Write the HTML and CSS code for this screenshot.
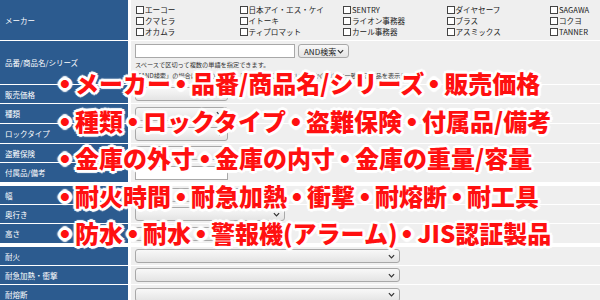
FILE: index.html
```html
<!DOCTYPE html>
<html lang="ja">
<head>
<meta charset="utf-8">
<title>金庫 検索</title>
<link rel="stylesheet" href="styles.css">
</head>
<body>
<div class="form">
  <div class="group">
    <div class="row r-maker">
      <div class="label">メーカー</div>
      <div class="field makers">
        <label class="cb"><span class="box"></span>エーコー</label>
        <label class="cb"><span class="box"></span>日本アイ・エス・ケイ</label>
        <label class="cb"><span class="box"></span>SENTRY</label>
        <label class="cb"><span class="box"></span>ダイヤセーフ</label>
        <label class="cb"><span class="box"></span>SAGAWA</label>
        <label class="cb"><span class="box"></span>クマヒラ</label>
        <label class="cb"><span class="box"></span>イトーキ</label>
        <label class="cb"><span class="box"></span>ライオン事務器</label>
        <label class="cb"><span class="box"></span>ブラス</label>
        <label class="cb"><span class="box"></span>コクヨ</label>
        <label class="cb"><span class="box"></span>オカムラ</label>
        <label class="cb"><span class="box"></span>ティプロマット</label>
        <label class="cb"><span class="box"></span>カール事務器</label>
        <label class="cb"><span class="box"></span>アスミックス</label>
        <label class="cb"><span class="box"></span>TANNER</label>
      </div>
    </div>
    <div class="row r-name">
      <div class="label">品番/商品名/シリーズ</div>
      <div class="field stack">
        <div class="inline">
          <span class="input w-name"></span>
          <span class="sel w-and">AND検索<svg class="chev" viewBox="0 0 8 5"><path d="M1 1l3 3 3-3" fill="none" stroke="#333" stroke-width="1.4"/></svg></span>
        </div>
        <p class="note">スペースで区切って複数の単語を指定できます。</p>
        <p class="note">「AND検索」の場合は全ての単語が、「OR検索」の場合はいずれかの単語に一致する商品を表示します。</p>
      </div>
    </div>
    <div class="row r-18">
      <div class="label">販売価格</div>
      <div class="field"><span class="sel w-s"><svg class="chev" viewBox="0 0 8 5"><path d="M1 1l3 3 3-3" fill="none" stroke="#333" stroke-width="1.4"/></svg></span></div>
    </div>
    <div class="row r-19">
      <div class="label">種類</div>
      <div class="field"><span class="sel w-s"><svg class="chev" viewBox="0 0 8 5"><path d="M1 1l3 3 3-3" fill="none" stroke="#333" stroke-width="1.4"/></svg></span></div>
    </div>
    <div class="row r-19">
      <div class="label">ロックタイプ</div>
      <div class="field"><span class="sel w-s"><svg class="chev" viewBox="0 0 8 5"><path d="M1 1l3 3 3-3" fill="none" stroke="#333" stroke-width="1.4"/></svg></span></div>
    </div>
    <div class="row r-18">
      <div class="label">盗難保険</div>
      <div class="field"><span class="sel w-s"><svg class="chev" viewBox="0 0 8 5"><path d="M1 1l3 3 3-3" fill="none" stroke="#333" stroke-width="1.4"/></svg></span></div>
    </div>
    <div class="row r-19">
      <div class="label">付属品/備考</div>
      <div class="field"><span class="input w-s"></span></div>
    </div>
  </div>
  <div class="group">
    <div class="row r-18">
      <div class="label">幅</div>
      <div class="field"><span class="sel w-m"><svg class="chev" viewBox="0 0 8 5"><path d="M1 1l3 3 3-3" fill="none" stroke="#333" stroke-width="1.4"/></svg></span></div>
    </div>
    <div class="row r-18">
      <div class="label">奥行き</div>
      <div class="field"><span class="sel w-m"><svg class="chev" viewBox="0 0 8 5"><path d="M1 1l3 3 3-3" fill="none" stroke="#333" stroke-width="1.4"/></svg></span></div>
    </div>
    <div class="row r-19">
      <div class="label">高さ</div>
      <div class="field"><span class="sel w-m"><svg class="chev" viewBox="0 0 8 5"><path d="M1 1l3 3 3-3" fill="none" stroke="#333" stroke-width="1.4"/></svg></span></div>
    </div>
  </div>
  <div class="group">
    <div class="row r-18">
      <div class="label">耐火</div>
      <div class="field"><span class="sel w-l"><svg class="chev" viewBox="0 0 8 5"><path d="M1 1l3 3 3-3" fill="none" stroke="#333" stroke-width="1.4"/></svg></span></div>
    </div>
    <div class="row r-18">
      <div class="label">耐急加熱・衝撃</div>
      <div class="field"><span class="sel w-l"><svg class="chev" viewBox="0 0 8 5"><path d="M1 1l3 3 3-3" fill="none" stroke="#333" stroke-width="1.4"/></svg></span></div>
    </div>
    <div class="row r-19">
      <div class="label">耐熔断</div>
      <div class="field"><span class="sel w-l"><svg class="chev" viewBox="0 0 8 5"><path d="M1 1l3 3 3-3" fill="none" stroke="#333" stroke-width="1.4"/></svg></span></div>
    </div>
  </div>
</div>
<div class="overlay">
  <p><span class="dot">・</span>メーカー<span class="dot">・</span>品番/商品名/シリーズ<span class="dot">・</span>販売価格</p>
  <p><span class="dot">・</span>種類<span class="dot">・</span>ロックタイプ<span class="dot">・</span>盗難保険<span class="dot">・</span>付属品/備考</p>
  <p><span class="dot">・</span>金庫の外寸<span class="dot">・</span>金庫の内寸<span class="dot">・</span>金庫の重量/容量</p>
  <p><span class="dot">・</span>耐火時間<span class="dot">・</span>耐急加熱<span class="dot">・</span>衝撃<span class="dot">・</span>耐熔断<span class="dot">・</span>耐工具</p>
  <p><span class="dot">・</span>防水<span class="dot">・</span>耐水<span class="dot">・</span>警報機(アラーム)<span class="dot">・</span>JIS認証製品</p>
</div>
</body>
</html>
```

FILE: styles.css
```css
* { box-sizing: border-box; margin: 0; padding: 0; }
html, body { width: 600px; height: 300px; overflow: hidden; }
body {
  background: #ffffff;
  font-family: "Noto Sans CJK JP", "Noto Sans", sans-serif;
  color: #222;
  position: relative;
}
.form { display: flex; flex-direction: column; gap: 4px; }
.group { display: flex; flex-direction: column; gap: 1px; }
.row {
  display: grid;
  grid-template-columns: 128px 469px;
  grid-template-rows: 100%;
  column-gap: 3px;
  overflow: hidden;
}
.r-maker { height: 40px; }
.r-name { height: 43px; }
.r-18 { height: 18px; }
.r-19 { height: 19px; }
.label {
  background: #2c5b8f;
  color: #ffffff;
  font-size: 7.5px;
  padding-left: 5px;
  display: flex;
  align-items: center;
  white-space: nowrap;
}
.field {
  background: #efefef;
  padding-left: 4px;
  display: flex;
  align-items: center;
  overflow: hidden;
}
.makers {
  display: grid;
  grid-template-columns: repeat(5, 103.5px);
  grid-auto-rows: 11px;
  align-content: start;
  padding-top: 4px;
  padding-left: 5px;
}
.cb {
  display: flex;
  align-items: center;
  font-size: 7.6px;
  line-height: 11px;
  color: #222;
  white-space: nowrap;
}
.box {
  width: 8px;
  height: 8px;
  border: 1px solid #444;
  background: #fff;
  margin-right: 1px;
  flex: none;
}
.stack {
  flex-direction: column;
  align-items: flex-start;
  justify-content: flex-start;
  padding-top: 3px;
}
.inline { display: flex; gap: 3px; }
.input {
  display: block;
  height: 14px;
  border: 1px solid #a8a8a8;
  background: #fff;
}
.w-name { width: 160px; }
.sel {
  display: flex;
  align-items: center;
  justify-content: space-between;
  height: 14px;
  padding: 0 4px 0 5px;
  border: 1px solid #a8a8a8;
  border-radius: 3px;
  background: linear-gradient(#f8f8f8, #e4e4e4);
  font-size: 8px;
  color: #222;
  white-space: nowrap;
}
.w-and { width: 51px; }
.w-s { width: 93px; justify-content: flex-end; }
.w-m { width: 150px; justify-content: flex-end; }
.w-l { width: 265px; justify-content: flex-end; }
.chev { width: 7px; height: 5px; flex: none; }
.note {
  font-size: 6.2px;
  line-height: 11px;
  color: #333;
  white-space: nowrap;
}
.stack .inline + .note { margin-top: 1px; }
.overlay {
  position: absolute;
  left: 55px;
  top: 64px;
  font-family: "Noto Sans CJK JP", sans-serif;
  font-size: 24px;
  font-weight: 900;
  line-height: 37.5px;
  color: #ff1010;
  white-space: nowrap;
  text-shadow:
    2px 0 0 #fff, -2px 0 0 #fff, 0 2px 0 #fff, 0 -2px 0 #fff,
    2px 2px 0 #fff, -2px -2px 0 #fff, 2px -2px 0 #fff, -2px 2px 0 #fff,
    3px 0 1px #fff, -3px 0 1px #fff, 0 3px 1px #fff, 0 -3px 1px #fff;
}
.dot {
  display: inline-block;
  margin: 0 -2px;
  transform: scale(1.2);
}
```
